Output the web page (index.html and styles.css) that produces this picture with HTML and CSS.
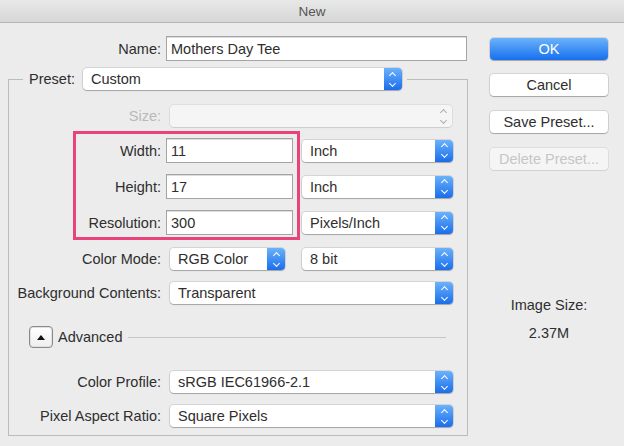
FILE: index.html
```html
<!DOCTYPE html>
<html lang="en">
<head>
    <meta charset="UTF-8">
    <meta name="viewport" content="width=device-width, initial-scale=1.0">
    <title>New</title>
    <link rel="stylesheet" href="styles.css">
</head>
<body>
    <div class="titlebar">New</div>

    <div class="dialog">
        <div class="main">
            <!-- Имя документа -->
            <div class="row name-row">
                <label class="lbl" for="docName">Name:</label>
                <input class="input name-input" id="docName" type="text" value="Mothers Day Tee">
            </div>

            <fieldset class="preset">
                <legend>
                    <span class="legend-lbl">Preset:</span>
                    <div class="popup preset-pop"><span class="val">Custom</span><span class="stepper"></span></div>
                </legend>

                <div class="row size-row">
                    <span class="lbl off">Size:</span>
                    <div class="popup full off"><span class="val"></span><span class="stepper"></span></div>
                </div>

                <!-- Размеры документа -->
                <div class="dims">
                    <div class="highlight">
                        <div class="drow"><span class="lbl">Width:</span><input class="input dim" type="text" value="11"></div>
                        <div class="drow"><span class="lbl">Height:</span><input class="input dim" type="text" value="17"></div>
                        <div class="drow"><span class="lbl">Resolution:</span><input class="input dim" type="text" value="300"></div>
                    </div>
                    <div class="units">
                        <div class="urow"><div class="popup unit"><span class="val">Inch</span><span class="stepper"></span></div></div>
                        <div class="urow"><div class="popup unit"><span class="val">Inch</span><span class="stepper"></span></div></div>
                        <div class="urow"><div class="popup unit"><span class="val">Pixels/Inch</span><span class="stepper"></span></div></div>
                    </div>
                </div>

                <div class="row mode-row">
                    <span class="lbl">Color Mode:</span>
                    <div class="popup mode"><span class="val">RGB Color</span><span class="stepper"></span></div>
                    <div class="popup bits"><span class="val">8 bit</span><span class="stepper"></span></div>
                </div>

                <div class="row bg-row">
                    <span class="lbl">Background Contents:</span>
                    <div class="popup full"><span class="val">Transparent</span><span class="stepper"></span></div>
                </div>

                <!-- Дополнительно -->
                <div class="adv">
                    <button class="adv-btn" type="button"><span class="tri"></span></button>
                    <span class="adv-text">Advanced</span>
                    <span class="adv-line"></span>
                </div>

                <div class="row profile-row">
                    <span class="lbl">Color Profile:</span>
                    <div class="popup full"><span class="val">sRGB IEC61966-2.1</span><span class="stepper"></span></div>
                </div>

                <div class="row ratio-row">
                    <span class="lbl">Pixel Aspect Ratio:</span>
                    <div class="popup full"><span class="val">Square Pixels</span><span class="stepper"></span></div>
                </div>
            </fieldset>
        </div>

        <div class="side">
            <button class="btn ok" type="button">OK</button>
            <button class="btn cancel" type="button">Cancel</button>
            <button class="btn save" type="button">Save Preset...</button>
            <button class="btn off" type="button">Delete Preset...</button>

            <div class="img-size">Image Size:</div>
            <div class="img-value">2.37M</div>
        </div>
    </div>
</body>
</html>
```

FILE: styles.css
```css
body {
    margin: 0;
    width: 624px;
    height: 446px;
    overflow: hidden;
    background-color: #ececec;
    font-family: "Liberation Sans", Arial, sans-serif;
    font-size: 14.5px;
    color: #2e2e2e;
}
.titlebar {
    height: 22px;
    line-height: 23px;
    border-bottom: 1px solid #b6b6b6;
    background: linear-gradient(#e8e8e8, #d7d7d7);
    text-align: center;
    font-size: 13.5px;
    color: #555;
}
.dialog {
    display: flex;
    padding: 13px 16px 0 8px;
}
.main {
    width: 460px;
}
.row {
    display: flex;
    align-items: center;
    height: 22px;
}
.lbl {
    flex-shrink: 0;
    width: 152px;
    margin-right: 9px;
    text-align: right;
    white-space: nowrap;
}
.lbl.off {
    color: #b9b9b9;
}
.name-row {
    height: 25px;
}
.name-row .lbl {
    width: 153px;
    margin-right: 5px;
}
.input {
    box-sizing: border-box;
    height: 25px;
    margin: 0;
    padding: 0 4px;
    border: 1px solid #a4a4a4;
    box-shadow: inset 0 1px 0 #dcdcdc;
    background: #fff;
    font: inherit;
    color: #2e2e2e;
    outline: none;
}
.name-input {
    width: 301px;
}

/* рамка Preset */
.preset {
    margin: 7px 0 0;
    padding: 0 0 8px;
    min-width: 0;
    border: 1px solid #bcbcbc;
}
.preset legend {
    display: flex;
    align-items: center;
    margin-left: 14px;
    padding: 0 5px 0 6px;
}
.legend-lbl {
    margin-right: 8px;
}
.preset-pop {
    width: 319px;
}

/* выпадающие списки */
.popup {
    box-sizing: border-box;
    display: flex;
    align-items: center;
    height: 22px;
    background: #fff;
    border-radius: 4px;
    box-shadow: 0 0 0 1px rgba(0, 0, 0, 0.1), 0 1px 1px rgba(0, 0, 0, 0.22);
}
.popup .val {
    flex: 1;
    padding-left: 8px;
    white-space: nowrap;
    overflow: hidden;
}
.stepper {
    align-self: stretch;
    width: 18px;
    display: flex;
    flex-direction: column;
    align-items: center;
    justify-content: center;
    gap: 3px;
    border-radius: 0 4px 4px 0;
    background: linear-gradient(#6ab2fb, #1a6dec);
}
.stepper::before,
.stepper::after {
    content: "";
    width: 4px;
    height: 4px;
    border: solid #fff;
    transform: rotate(45deg);
}
.stepper::before {
    border-width: 1.5px 0 0 1.5px;
    margin-top: 2px;
}
.stepper::after {
    border-width: 0 1.5px 1.5px 0;
    margin-bottom: 2px;
}
.popup.off {
    background: #f5f5f5;
    box-shadow: 0 0 0 1px rgba(0, 0, 0, 0.06), 0 1px 1px rgba(0, 0, 0, 0.08);
}
.popup.off .stepper {
    background: none;
}
.popup.off .stepper::before,
.popup.off .stepper::after {
    border-color: #acacac;
}
.full {
    width: 283px;
}
.size-row {
    margin-top: 15px;
}
.size-row .full {
    width: 282px;
}

/* Width / Height / Resolution */
.dims {
    display: flex;
    margin-top: 4px;
}
.highlight {
    display: flex;
    flex-direction: column;
    gap: 11px;
    margin-left: 64px;
    padding: 4px 4px 2px 0;
    border: 3px solid #e8447b;
}
.drow {
    display: flex;
    align-items: center;
}
.drow .lbl {
    width: 85px;
    margin-right: 5px;
}
.dim {
    width: 127px;
}
.units {
    display: flex;
    flex-direction: column;
    gap: 11px;
    margin-left: 2px;
    padding-top: 7px;
}
.urow {
    display: flex;
    align-items: center;
    height: 25px;
}
.unit {
    width: 151px;
}
.mode-row {
    margin-top: 8px;
}
.mode {
    width: 115px;
}
.bits {
    width: 151px;
    margin-left: 17px;
}
.bg-row {
    margin-top: 12px;
}

/* Advanced */
.adv {
    display: flex;
    align-items: center;
    height: 22px;
    margin-top: 22px;
    padding-left: 20px;
}
.adv-btn {
    box-sizing: border-box;
    display: flex;
    align-items: center;
    justify-content: center;
    width: 24px;
    height: 22px;
    padding: 0;
    border: 1px solid #8a8a8a;
    border-radius: 4px;
    background: linear-gradient(#ffffff, #eeeeee);
    box-shadow: inset 0 0 0 1px #e0e0e0;
}
.tri {
    width: 0;
    height: 0;
    border-left: 4px solid transparent;
    border-right: 4px solid transparent;
    border-bottom: 5px solid #111;
}
.adv-text {
    margin-left: 5px;
}
.adv-line {
    flex: 1;
    height: 1px;
    margin: 0 21px 0 5px;
    background: #c6c6c6;
}
.profile-row {
    margin-top: 23px;
}
.ratio-row {
    margin-top: 12px;
}

/* кнопки справа */
.side {
    width: 118px;
    margin-left: 22px;
    padding-top: 2px;
    text-align: center;
}
.btn {
    display: block;
    width: 100%;
    height: 22px;
    padding: 0;
    border: none;
    border-radius: 4px;
    background: #fff;
    box-shadow: 0 0 0 1px rgba(0, 0, 0, 0.1), 0 1px 1px rgba(0, 0, 0, 0.22);
    font: inherit;
    color: #2e2e2e;
}
.btn.ok {
    background: linear-gradient(#6bb3fb, #166fee);
    color: #fff;
}
.btn.cancel {
    margin-top: 14px;
}
.btn.save {
    margin-top: 15px;
}
.btn.off {
    margin-top: 15px;
    background: #f5f5f5;
    color: #c6c6c6;
    box-shadow: 0 0 0 1px rgba(0, 0, 0, 0.06), 0 1px 1px rgba(0, 0, 0, 0.06);
}
.img-size {
    margin-top: 126px;
    line-height: 18px;
}
.img-value {
    margin-top: 10px;
    line-height: 18px;
}
```
